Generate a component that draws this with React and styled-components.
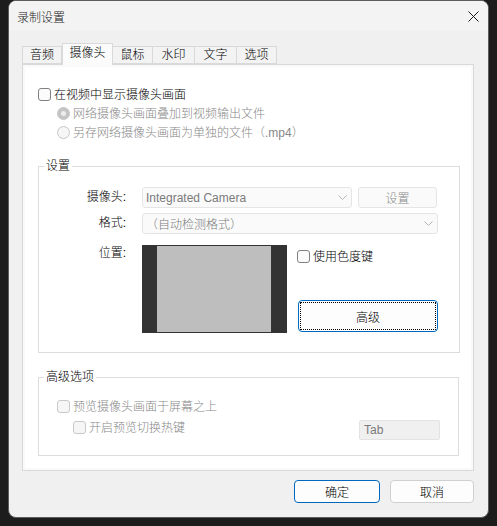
import React from "react"
import styled, { createGlobalStyle } from "styled-components"

const GlobalStyle = createGlobalStyle`
	html, body {
		margin: 0;
		padding: 0;
		background: #1c1c1c;
	}
	body {
		font-family: "Liberation Sans", "Noto Sans CJK SC", sans-serif;
		font-size: 12px;
		font-weight: 300;
		color: #000;
	}
`

const Desktop = styled.div`
	width: 497px;
	height: 526px;
	box-sizing: border-box;
	padding-left: 8px;
	background: #1c1c1c;
`

const Window = styled.div`
	width: 481px;
	height: 518px;
	box-sizing: border-box;
	background: #f0f0f0;
	border: 1px solid #5c5c5c;
	border-radius: 8px;
	overflow: hidden;
	display: flex;
	flex-direction: column;
`

const TitleBar = styled.div`
	height: 30px;
	flex: none;
	display: flex;
	align-items: center;
	justify-content: space-between;
	padding: 0 9px 0 8px;
	background: #f3f3f3;
	color: #1a1a1a;

	svg {
		display: block;
	}
`

const Body = styled.div`
	padding: 12px 0 0 13px;
`

const TabStrip = styled.div`
	display: flex;
	align-items: flex-end;
	height: 21px;
`

const Tab = styled.div`
	position: relative;
	z-index: ${p => (p.active ? 1 : 0)};
	width: ${p => p.w}px;
	height: ${p => (p.active ? 22 : 18)}px;
	margin-bottom: ${p => (p.active ? -1 : 0)}px;
	box-sizing: border-box;
	border: 1px solid #d9d9d9;
	border-bottom: ${p => (p.active ? "none" : "1px solid #d9d9d9")};
	border-left: ${p => (p.first || p.active ? "1px solid #d9d9d9" : "none")};
	background: ${p => (p.active ? "#fbfbfb" : "#f3f3f3")};
	display: flex;
	justify-content: center;
	align-items: ${p => (p.active ? "flex-start" : "center")};
	padding-top: ${p => (p.active ? 1 : 0)}px;
	line-height: 16px;
`

const Panel = styled.div`
	width: 452px;
	height: 407px;
	box-sizing: border-box;
	border: 1px solid #d9d9d9;
	background: #fff;
	box-shadow: inset 0 0 0 2px #f9f9f9;
	padding: 20px 0 0 15px;
`

const CheckRow = styled.div`
	display: flex;
	align-items: center;
	gap: 3px;
	height: 19px;
	padding-left: ${p => p.indent || 0}px;
	color: ${p => (p.disabled ? "#888" : "#000")};
	line-height: 16px;
`

const Box = styled.span`
	flex: none;
	width: 13px;
	height: 13px;
	box-sizing: border-box;
	border: 1px solid ${p => (p.disabled ? "#c9c9c9" : "#808080")};
	border-radius: 3px;
	background: ${p => (p.disabled ? "#f6f6f6" : "#fbfbfb")};
`

const Radio = styled.span`
	flex: none;
	width: 13px;
	height: 13px;
	box-sizing: border-box;
	border-radius: 50%;
	border: 1px solid #c6c6c6;
	background: ${p => (p.checked ? "#c4c4c4" : "#f6f6f6")};
	display: flex;
	align-items: center;
	justify-content: center;

	&::after {
		content: "";
		display: ${p => (p.checked ? "block" : "none")};
		width: 5px;
		height: 5px;
		border-radius: 50%;
		background: #ededed;
	}
`

const Group = styled.fieldset`
	margin: 16px 0 0 0;
	padding: 0;
	width: ${p => p.w}px;
	box-sizing: border-box;
	min-width: 0;
	border: 1px solid #dcdcdc;
`

const Legend = styled.legend`
	margin-left: 5px;
	padding: 0 2px;
	height: 16px;
	line-height: 16px;
	font-size: 12px;
`

const SettingsGrid = styled.div`
	display: grid;
	grid-template-columns: 89px 1fr;
	column-gap: 14px;
	row-gap: 5px;
	padding: 13px 21px 19px 0;
`

const Label = styled.div`
	text-align: right;
	padding-right: 2px;
	margin-top: ${p => p.mt || 0}px;
	line-height: ${p => (p.top ? 16 : 21)}px;
	align-self: start;
`

const Line = styled.div`
	display: flex;
	gap: 6px;
	margin-top: ${p => p.mt || 0}px;
`

const Select = styled.div`
	width: ${p => (p.w ? `${p.w}px` : "auto")};
	flex: ${p => (p.w ? "none" : 1)};
	height: 21px;
	box-sizing: border-box;
	border: 1px solid #e5e5e5;
	border-radius: 3px;
	background: #fafafa;
	display: flex;
	align-items: center;
	justify-content: space-between;
	padding: 0 4px 0 3px;
	color: #7a7a7a;

	svg {
		display: block;
	}
`

const FlatButton = styled.div`
	width: ${p => p.w}px;
	height: 21px;
	box-sizing: border-box;
	border: 1px solid #e5e5e5;
	border-radius: 3px;
	background: #fafafa;
	color: #8a8a8a;
	display: flex;
	align-items: center;
	justify-content: center;
`

const Preview = styled.div`
	width: 145px;
	height: 88px;
	box-sizing: border-box;
	flex: none;
	background: #bebebe;
	border-style: solid;
	border-color: #333;
	border-width: 1px 16px 1px 15px;
`

const Side = styled.div`
	margin-left: 4px;
	padding-top: 2px;
	display: flex;
	flex-direction: column;
	justify-content: space-between;
`

const Button = styled.div`
	position: relative;
	width: ${p => p.w}px;
	height: ${p => p.h}px;
	margin: ${p => p.m || 0};
	box-sizing: border-box;
	border: 1px solid ${p => (p.primary ? "#0067c0" : "#d0d0d0")};
	border-radius: 4px;
	background: #fdfdfd;
	display: flex;
	align-items: center;
	justify-content: center;
	color: #000;

	&::after {
		content: "";
		display: ${p => (p.focus ? "block" : "none")};
		position: absolute;
		inset: 1px;
		border: 1px dotted #000;
	}
`

const AdvBody = styled.div`
	padding: 12px 18px 15px 18px;
`

const SplitRow = styled.div`
	display: flex;
	justify-content: space-between;
	align-items: flex-start;
	margin-top: 2px;
`

const KeyInput = styled.div`
	width: 81px;
	height: 20px;
	margin-top: 2px;
	box-sizing: border-box;
	border: 1px solid #e3e3e3;
	border-radius: 2px;
	background: #f0f0f0;
	color: #7a7a7a;
	padding-left: 4px;
	line-height: 18px;
`

const Footer = styled.div`
	width: 452px;
	margin-top: 9px;
	display: flex;
	justify-content: flex-end;
	gap: 10px;
`

const Chevron = () => (
	<svg width="9" height="5" viewBox="0 0 9 5">
		<path d="M0.5 0.5 L4.5 4.5 L8.5 0.5" fill="none" stroke="#b5b5b5" strokeWidth="1" />
	</svg>
)

const tabs = [
	{ name: "音频", w: 40 },
	{ name: "摄像头", w: 51, active: true },
	{ name: "鼠标", w: 40 },
	{ name: "水印", w: 42 },
	{ name: "文字", w: 42 },
	{ name: "选项", w: 40 },
]

const App = () => {
	return (
		<Desktop>
			<GlobalStyle />
			<Window>
				<TitleBar>
					<span>录制设置</span>
					<svg width="11" height="11" viewBox="0 0 11 11">
						<path d="M0.5 0.5 L10.5 10.5 M10.5 0.5 L0.5 10.5" stroke="#1a1a1a" strokeWidth="1" />
					</svg>
				</TitleBar>

				<Body>
					<TabStrip>
						{tabs.map((t, i) => (
							<Tab key={t.name} w={t.w} active={t.active} first={i === 0}>
								{t.name}
							</Tab>
						))}
					</TabStrip>

					<Panel>
						<CheckRow>
							<Box />
							在视频中显示摄像头画面
						</CheckRow>
						<CheckRow indent={19} disabled>
							<Radio checked />
							网络摄像头画面叠加到视频输出文件
						</CheckRow>
						<CheckRow indent={19} disabled>
							<Radio />
							另存网络摄像头画面为单独的文件（.mp4）
						</CheckRow>

						<Group w={422}>
							<Legend>设置</Legend>
							<SettingsGrid>
								<Label>摄像头:</Label>
								<Line>
									<Select w={210}>
										<span>Integrated Camera</span>
										<Chevron />
									</Select>
									<FlatButton w={79}>设置</FlatButton>
								</Line>

								<Label>格式:</Label>
								<Line>
									<Select>
										<span>（自动检测格式）</span>
										<Chevron />
									</Select>
								</Line>

								<Label top mt={6}>位置:</Label>
								<Line mt={6}>
									<Preview />
									<Side>
										<CheckRow>
											<Box />
											使用色度键
										</CheckRow>
										<Button primary focus w={140} h={32} m="0 0 1px 1px">
											高级
										</Button>
									</Side>
								</Line>
							</SettingsGrid>
						</Group>

						<Group w={421}>
							<Legend>高级选项</Legend>
							<AdvBody>
								<CheckRow disabled>
									<Box disabled />
									预览摄像头画面于屏幕之上
								</CheckRow>
								<SplitRow>
									<CheckRow indent={16} disabled>
										<Box disabled />
										开启预览切换热键
									</CheckRow>
									<KeyInput>Tab</KeyInput>
								</SplitRow>
							</AdvBody>
						</Group>
					</Panel>

					<Footer>
						<Button primary w={86} h={23}>确定</Button>
						<Button w={84} h={23}>取消</Button>
					</Footer>
				</Body>
			</Window>
		</Desktop>
	)
}

export default App
